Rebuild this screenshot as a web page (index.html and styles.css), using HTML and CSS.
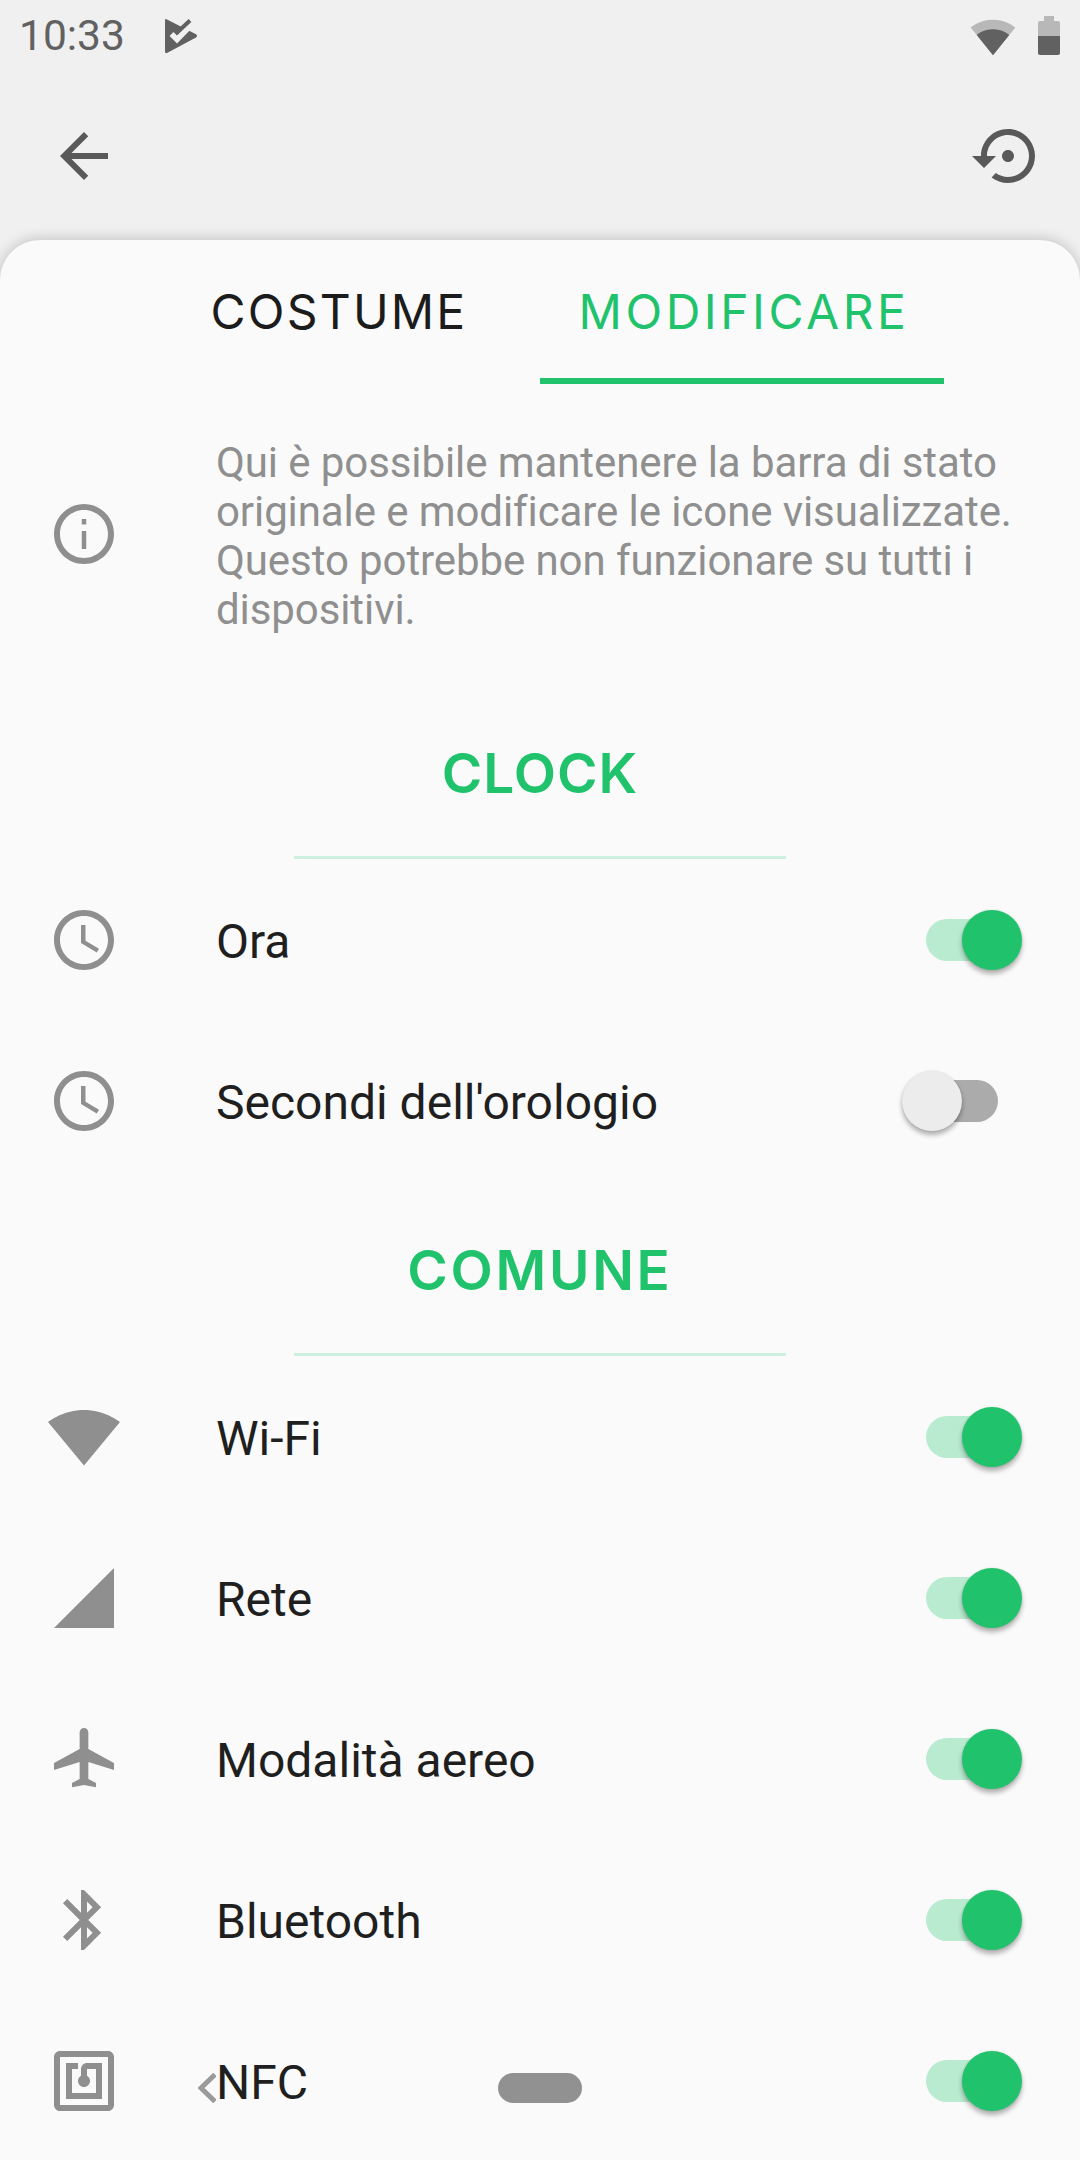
FILE: index.html
```html
<!DOCTYPE html>
<html lang="it">
<head>
<meta charset="utf-8">
<title>Modificare</title>
<link rel="stylesheet" href="styles.css">
</head>
<body>
<div class="screen">
  <header class="top">
    <div class="status">
      <span class="time">10:33</span>
      <svg class="st-play" viewBox="0 0 32 34"><path class="dk" d="M1.500.2 31 15.300Q33 17 31 18.500L2 34Q0 34.500 0 33V1.500Q0-.2 1.500.2Z"/><path class="lt" d="M6.500 15 12 20.500 27 5"/><path class="dkl" d="M11 14.500 25 1.500"/></svg>
      <span class="spacer"></span>
      <svg class="st-wifi" viewBox="0 0 24 24"><path class="faint" d="M12.010 21.490 23.640 7C23.190 6.660 18.710 3 12 3S.81 6.660.36 7z"/><path d="M3.530 10.950 12 21.500l8.470-10.550C20.040 10.620 16.810 8 12 8c-4.810 0-8.040 2.620-8.470 2.950z"/></svg>
      <svg class="st-batt" viewBox="0 0 22 39"><path class="faint" d="M6 0h10v5h4q2 0 2 2v13H0V7q0-2 2-2h4z"/><path d="M0 20h22v17q0 2-2 2H2q-2 0-2-2z"/></svg>
    </div>
    <div class="toolbar">
      <svg class="ico72" viewBox="0 0 24 24"><path d="M20 11H7.830l5.590-5.590L12 4l-8 8 8 8 1.410-1.410L7.830 13H20z"/></svg>
      <svg class="ico72" viewBox="0 0 24 24"><path d="M14 12c0-1.100-.9-2-2-2s-2 .9-2 2 .9 2 2 2 2-.9 2-2zm-2-9c-4.970 0-9 4.030-9 9H0l4 4 4-4H5c0-3.870 3.130-7 7-7s7 3.130 7 7-3.130 7-7 7c-1.510 0-2.910-.49-4.060-1.300l-1.420 1.440C8.040 20.300 9.940 21 12 21c4.970 0 9-4.030 9-9s-4.030-9-9-9z"/></svg>
    </div>
  </header>

  <main class="sheet">
    <nav class="tabs">
      <div class="tab">COSTUME</div>
      <div class="tab active">MODIFICARE</div>
    </nav>

    <section class="intro">
      <svg class="ico72 grey" viewBox="0 0 24 24"><path d="M11.250 7h1.500v1.800h-1.500zm0 4h1.500v6h-1.500zM12 2C6.480 2 2 6.480 2 12s4.480 10 10 10 10-4.480 10-10S17.520 2 12 2zm0 18c-4.410 0-8-3.590-8-8s3.590-8 8-8 8 3.590 8 8-3.590 8-8 8z"/></svg>
      <p class="intro-text">Qui è possibile mantenere la barra di stato originale e modificare le icone visualizzate. Questo potrebbe non funzionare su tutti i dispositivi.</p>
    </section>

    <div class="section-head"><h2 class="section-title">CLOCK</h2><div class="section-rule"></div></div>

    <div class="row">
      <svg class="ico72 grey" viewBox="0 0 24 24"><path d="M11.990 2C6.470 2 2 6.480 2 12s4.470 10 9.990 10C17.520 22 22 17.520 22 12S17.520 2 11.990 2zM12 20c-4.420 0-8-3.580-8-8s3.580-8 8-8 8 3.580 8 8-3.580 8-8 8zm.5-13H11v6l5.250 3.150.75-1.230-4.500-2.670z"/></svg>
      <span class="label">Ora</span>
      <span class="toggle on"><span class="track"></span><span class="thumb"></span></span>
    </div>
    <div class="row">
      <svg class="ico72 grey" viewBox="0 0 24 24"><path d="M11.990 2C6.470 2 2 6.480 2 12s4.470 10 9.990 10C17.520 22 22 17.520 22 12S17.520 2 11.990 2zM12 20c-4.420 0-8-3.580-8-8s3.580-8 8-8 8 3.580 8 8-3.580 8-8 8zm.5-13H11v6l5.250 3.150.75-1.230-4.500-2.670z"/></svg>
      <span class="label">Secondi dell'orologio</span>
      <span class="toggle"><span class="track"></span><span class="thumb"></span></span>
    </div>

    <div class="section-head"><h2 class="section-title wide">COMUNE</h2><div class="section-rule"></div></div>

    <div class="row">
      <svg class="ico72 grey" viewBox="0 0 24 24"><path d="M12 21.500 24 7C23.500 6.660 18.710 3 12 3S.5 6.660 0 7z"/></svg>
      <span class="label">Wi-Fi</span>
      <span class="toggle on"><span class="track"></span><span class="thumb"></span></span>
    </div>
    <div class="row">
      <svg class="ico72 grey" viewBox="0 0 24 24"><path d="M2 22h20V2z"/></svg>
      <span class="label">Rete</span>
      <span class="toggle on"><span class="track"></span><span class="thumb"></span></span>
    </div>
    <div class="row">
      <svg class="ico72 grey" viewBox="0 0 24 24"><path d="M22 15.700V13.300L13.450 8.700V3.100c0-.8-.65-1.450-1.450-1.450s-1.450.65-1.450 1.450V8.700L2 13.300v2.400L10.550 13v5.700L8 20v1.400l4-.75 4 .75V20l-2.550-1.300V13z"/></svg>
      <span class="label">Modalità aereo</span>
      <span class="toggle on"><span class="track"></span><span class="thumb"></span></span>
    </div>
    <div class="row">
      <svg class="ico72 grey" viewBox="0 0 24 24"><path d="M17.710 7.710 12 2h-1v7.590L6.410 5 5 6.410 10.590 12 5 17.590 6.410 19 11 14.410V22h1l5.710-5.710-4.300-4.290 4.300-4.290zM13 5.830l1.880 1.880L13 9.590V5.830zm1.880 10.460L13 18.170v-3.760l1.880 1.880z"/></svg>
      <span class="label">Bluetooth</span>
      <span class="toggle on"><span class="track"></span><span class="thumb"></span></span>
    </div>
    <div class="row">
      <svg class="ico72 grey" viewBox="0 0 24 24"><path d="M20 2H4c-1.100 0-2 .9-2 2v16c0 1.100.9 2 2 2h16c1.100 0 2-.9 2-2V4c0-1.100-.9-2-2-2zm0 18H4V4h16v16zM18 6h-5c-1.100 0-2 .9-2 2v2.280c-.6.35-1 .98-1 1.720 0 1.100.9 2 2 2s2-.9 2-2c0-.74-.4-1.380-1-1.720V8h3v8H8V8h2V6H6v12h12V6z"/></svg>
      <span class="label">NFC</span>
      <span class="toggle on"><span class="track"></span><span class="thumb"></span></span>
    </div>
  </main>

  <div class="gesture">
    <svg class="gesture-chev" viewBox="0 0 18 30"><path d="M17 1.500 3 15l14 13.500"/></svg>
    <span class="gesture-pill"></span>
  </div>
</div>
</body>
</html>
```

FILE: styles.css
```css
* { box-sizing: border-box; }
html, body { margin: 0; padding: 0; height: 2160px; overflow: hidden; }
body { font-family: Roboto, "Noto Sans", sans-serif; background: #f0f0f0; }

.screen { position: relative; width: 1080px; height: 2160px; display: flex; flex-direction: column; overflow: hidden; }

.top { height: 240px; flex: none; display: flex; flex-direction: column; background: #f0f0f0; }
.status { height: 72px; display: flex; align-items: center; padding: 0 20px 0 19px; }
.time { font-size: 42.500px; line-height: 72px; color: #616161; }
.st-play { width: 32px; height: 34px; margin-left: 40px; overflow: visible; }
.st-play .dk { fill: #616161; }
.st-play .lt { fill: none; stroke: #f0f0f0; stroke-width: 5.500; }
.st-play .dkl { fill: none; stroke: #616161; stroke-width: 4; }
.spacer { flex: 1; }
.st-wifi { width: 46px; height: 46px; fill: #616161; margin-right: 22px; margin-top: 1px; }
.st-batt { width: 22px; height: 39px; fill: #616161; margin-top: -1px; }
.faint { fill: #b8b8b8; }

.toolbar { height: 168px; display: flex; justify-content: space-between; align-items: center; padding: 0 36px 0 48px; }
.toolbar .ico72 { fill: #595959; }
.ico72 { width: 72px; height: 72px; flex: none; display: block; }
.grey { fill: #8f8f8f; }

.sheet { flex: 1; min-height: 0; background: #fafafa; border-radius: 40px 40px 0 0; box-shadow: 0 -1px 14px rgba(0,0,0,.2); overflow: hidden; position: relative; }

.tabs { height: 144px; display: flex; justify-content: center; }
.tab { width: 404px; height: 144px; padding: 42px 0 0 2px; text-align: center; font-family: Inter, "Noto Sans", sans-serif; font-size: 48px; line-height: 60px; letter-spacing: 2.200px; color: #1c1c1c; }
.tab.active { color: #20c36c; border-bottom: 6px solid #20c36c; letter-spacing: 3.500px; padding-left: 4px; }

.intro { height: 300px; display: flex; align-items: center; padding-left: 48px; }
.intro-text { margin: 0 48px 0 96px; padding-top: 3px; font-size: 42px; line-height: 49px; letter-spacing: -.09px; color: #8f8f8f; }

.section-head { height: 175px; display: flex; flex-direction: column; align-items: center; }
.section-title { margin: 0; height: 172px; padding-top: 54px; font-family: Inter, "Noto Sans", sans-serif; font-weight: 600; font-size: 55px; line-height: 70px; letter-spacing: 1px; color: #20c36c; }
.section-title.wide { letter-spacing: 2.700px; }
.section-rule { width: 492px; height: 3px; background: #cdf0de; }

.row { height: 161px; display: flex; align-items: center; padding-left: 48px; padding-right: 58px; }
.label { margin: 4px 0 0 96px; font-size: 48px; color: #1f1f1f; flex: 1; }

.toggle { position: relative; width: 120px; height: 60px; flex: none; }
.track { position: absolute; left: 24px; top: 9px; width: 72px; height: 42px; border-radius: 21px; background: #ababab; }
.thumb { position: absolute; left: 0; top: 0; width: 60px; height: 60px; border-radius: 50%; background: #ececec; box-shadow: 0 4px 5px rgba(0,0,0,.3), 0 0 2px rgba(0,0,0,.12); }
.toggle.on .track { background: #b8ebd0; }
.toggle.on .thumb { left: 60px; background: #20c36c; }

.gesture { position: absolute; left: 198px; top: 2073px; width: 384px; height: 30px; display: flex; align-items: center; justify-content: space-between; }
.gesture-chev { width: 18px; height: 30px; fill: none; stroke: #9a9a9a; stroke-width: 5; }
.gesture-pill { width: 84px; height: 30px; border-radius: 15px; background: #919191; }
```
